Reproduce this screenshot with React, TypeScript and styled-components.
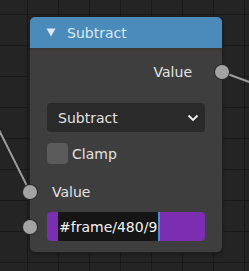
import React from 'react'

import styled, { createGlobalStyle } from 'styled-components'

const GlobalStyle = createGlobalStyle`
  html, body {
    margin: 0;
    padding: 0;
    background: #232323;
  }
  * {
    box-sizing: border-box;
  }
`

const Canvas = styled.div`
  position: relative;
  width: 249px;
  height: 271px;
  overflow: hidden;
  background-color: #242424;
  background-image: linear-gradient(to right, #191919 1px, transparent 1px),
    linear-gradient(to bottom, #191919 1px, transparent 1px);
  background-size: 31px 31px;
  background-position: 27px 14px;
  font-family: 'DejaVu Sans', 'Liberation Sans', sans-serif;
  font-size: 14px;
`

const Wires = styled.svg`
  position: absolute;
  left: 0;
  top: 0;
`

const Node = styled.div`
  position: absolute;
  left: 30px;
  top: 17px;
  width: 192px;
  height: 235px;
  display: flex;
  flex-direction: column;
  background: #3e3e3e;
  border-radius: 5px;
  box-shadow: 0 0 0 1px #1e1e1e, 0 2px 4px rgba(0, 0, 0, 0.35);
`

const Header = styled.div`
  display: flex;
  align-items: center;
  gap: 11px;
  height: 31px;
  padding-left: 16px;
  background: #4b8bba;
  border-radius: 5px 5px 0 0;
  border-bottom: 2px solid #3b3735;
  color: #d9eaf6;
  box-sizing: content-box;
`

const Body = styled.div`
  display: flex;
  flex-direction: column;
  padding: 11px 17px 0;
`

const Row = styled.div<{ $align?: 'left' | 'right'; $top?: number }>`
  position: relative;
  display: flex;
  align-items: center;
  justify-content: ${(p) => (p.$align === 'right' ? 'flex-end' : 'flex-start')};
  height: 22px;
  margin-top: ${(p) => p.$top ?? 0}px;
  color: #e4e4e4;
`

const Socket = styled.span<{ $side: 'left' | 'right' }>`
  position: absolute;
  top: 50%;
  ${(p) => (p.$side === 'left' ? 'left: -24px;' : 'right: -24px;')}
  width: 14px;
  height: 14px;
  margin-top: -7px;
  border-radius: 50%;
  background: #a3a3a3;
  box-shadow: 0 0 0 1px #2a2a2a;
`

const OutLabel = styled.span`
  margin-right: 13px;
`

const Select = styled.div`
  display: flex;
  align-items: center;
  justify-content: space-between;
  height: 29px;
  margin-top: 20px;
  padding: 0 6px 0 11px;
  background: #2a2a2a;
  border-radius: 4px;
  color: #e2e2e2;
`

const CheckRow = styled.div`
  display: flex;
  align-items: center;
  gap: 4px;
  margin-top: 11px;
  height: 21px;
  color: #e2e2e2;
`

const Box = styled.span`
  width: 21px;
  height: 21px;
  border-radius: 4px;
  background: #5b5b5b;
`

const InLabel = styled.span`
  padding-left: 5px;
`

const Field = styled.div`
  position: relative;
  display: flex;
  height: 29px;
  margin-top: 9px;
  padding-left: 11px;
  background: #7b2eb0;
  border-radius: 4px;
`

const Edit = styled.div`
  display: flex;
  align-items: center;
  width: 102px;
  padding-left: 1px;
  background: #151515;
  border-right: 2px solid #4a8fd8;
  color: #f4f4f4;
`

const Triangle = () => (
  <svg width="10" height="9" viewBox="0 0 10 9">
    <path d="M0.5 0.5 L9.5 0.5 L5 8.5 Z" fill="#d9eaf6" />
  </svg>
)

const Chevron = () => (
  <svg width="12" height="8" viewBox="0 0 12 8">
    <path d="M1.5 1.5 L6 6 L10.5 1.5" fill="none" stroke="#f0f0f0" strokeWidth="1.8" />
  </svg>
)

export default function App() {
  return (
    <Canvas>
      <GlobalStyle />
      <Wires width="249" height="271">
        <line x1="-2" y1="128" x2="30" y2="192" stroke="#9c9c9c" strokeWidth="2" />
        <line x1="222" y1="72" x2="252" y2="83" stroke="#9c9c9c" strokeWidth="2" />
      </Wires>
      <Node>
        <Header>
          <Triangle />
          <span>Subtract</span>
        </Header>
        <Body>
          <Row $align="right">
            <OutLabel>Value</OutLabel>
            <Socket $side="right" />
          </Row>
          <Select>
            <span>Subtract</span>
            <Chevron />
          </Select>
          <CheckRow>
            <Box />
            <span>Clamp</span>
          </CheckRow>
          <Row $top={17}>
            <InLabel>Value</InLabel>
            <Socket $side="left" />
          </Row>
          <Field>
            <Edit>#frame/480/9</Edit>
            <Socket $side="left" />
          </Field>
        </Body>
      </Node>
    </Canvas>
  )
}
